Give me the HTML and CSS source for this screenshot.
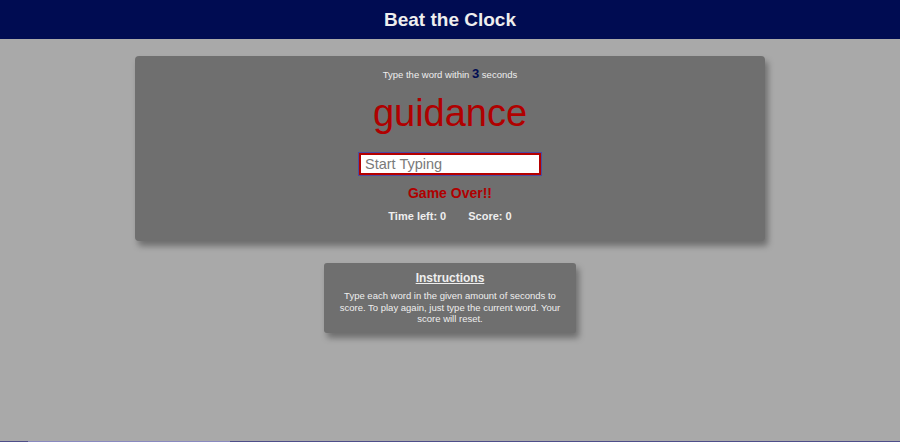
FILE: index.html
```html
<!DOCTYPE html>
<html>
<head>
<meta charset="utf-8">
<link rel="stylesheet" href="styles.css">
</head>
<body>
<header class="topbar"><h1 class="title">Beat the Clock</h1></header>
<main class="main">
  <section class="game">
    <p class="prompt">Type the word within <span class="secs">3</span> seconds</p>
    <h2 class="word">guidance</h2>
    <input class="entry" type="text" placeholder="Start Typing">
    <p class="message">Game Over!!</p>
    <div class="stats">
      <span>Time left: <span class="val">0</span></span>
      <span>Score: <span class="val">0</span></span>
    </div>
  </section>
  <section class="help">
    <h3 class="help-title">Instructions</h3>
    <p class="help-text">Type each word in the given amount of seconds to score. To play again, just type the current word. Your score will reset.</p>
  </section>
</main>
<footer class="foot"><span class="foot-link"></span></footer>
</body>
</html>
```
FILE: styles.css
```css
* { box-sizing: border-box; }
html, body { margin: 0; padding: 0; }
body {
  background: #a9a9a9;
  font-family: "Liberation Sans", Arial, sans-serif;
  height: 442px;
  overflow: hidden;
  display: flex;
  flex-direction: column;
}
.topbar {
  background: #000c52;
  height: 39px;
  display: flex;
  align-items: center;
  justify-content: center;
}
.title {
  margin: 0;
  color: #eeeeee;
  font-size: 19px;
  font-weight: bold;
}
.main {
  flex: 1;
  display: flex;
  flex-direction: column;
  align-items: center;
  padding-top: 17px;
}
.game {
  width: 630px;
  height: 185px;
  background: #6f6f6f;
  border-radius: 4px;
  box-shadow: 3px 5px 6px rgba(0,0,0,0.35);
  display: flex;
  flex-direction: column;
  align-items: center;
  padding-top: 11px;
  color: #eeeeee;
}
.prompt {
  margin: 0;
  font-size: 9.5px;
  height: 14px;
  line-height: 14px;
}
.secs {
  color: #000c52;
  font-weight: bold;
  font-size: 13px;
}
.word {
  margin: 10px 0 0;
  font-weight: normal;
  font-size: 38px;
  line-height: 44px;
  color: #b00000;
}
.entry {
  margin-top: 18px;
  width: 182px;
  height: 22px;
  border: 2px solid #b50000;
  outline: 1px solid #4c4ca0;
  background: #fff;
  font-family: inherit;
  font-size: 14.5px;
  padding: 0 4px;
  color: #333;
}
.entry::placeholder { color: #7a7a7a; }
.message {
  margin: 9px 0 0;
  color: #b00000;
  font-weight: bold;
  font-size: 14px;
  line-height: 18px;
}
.stats {
  margin-top: 7px;
  display: flex;
  gap: 22px;
  font-weight: bold;
  font-size: 11px;
  line-height: 14px;
  color: #eeeeee;
}
.help {
  margin-top: 22px;
  width: 252px;
  height: 70px;
  background: #6f6f6f;
  border-radius: 3px;
  box-shadow: 3px 5px 6px rgba(0,0,0,0.35);
  color: #eeeeee;
  text-align: center;
  padding: 8px 12px 0;
}
.help-title {
  margin: 0;
  font-size: 12px;
  line-height: 14px;
  text-decoration: underline;
}
.help-text {
  margin: 5px 0 0;
  font-size: 9.5px;
  line-height: 11.5px;
}
.foot {
  height: 1px;
  background: #4e4e8a;
  display: flex;
  padding-left: 28px;
}
.foot-link {
  width: 202px;
  background: #8a8ac0;
}
```
